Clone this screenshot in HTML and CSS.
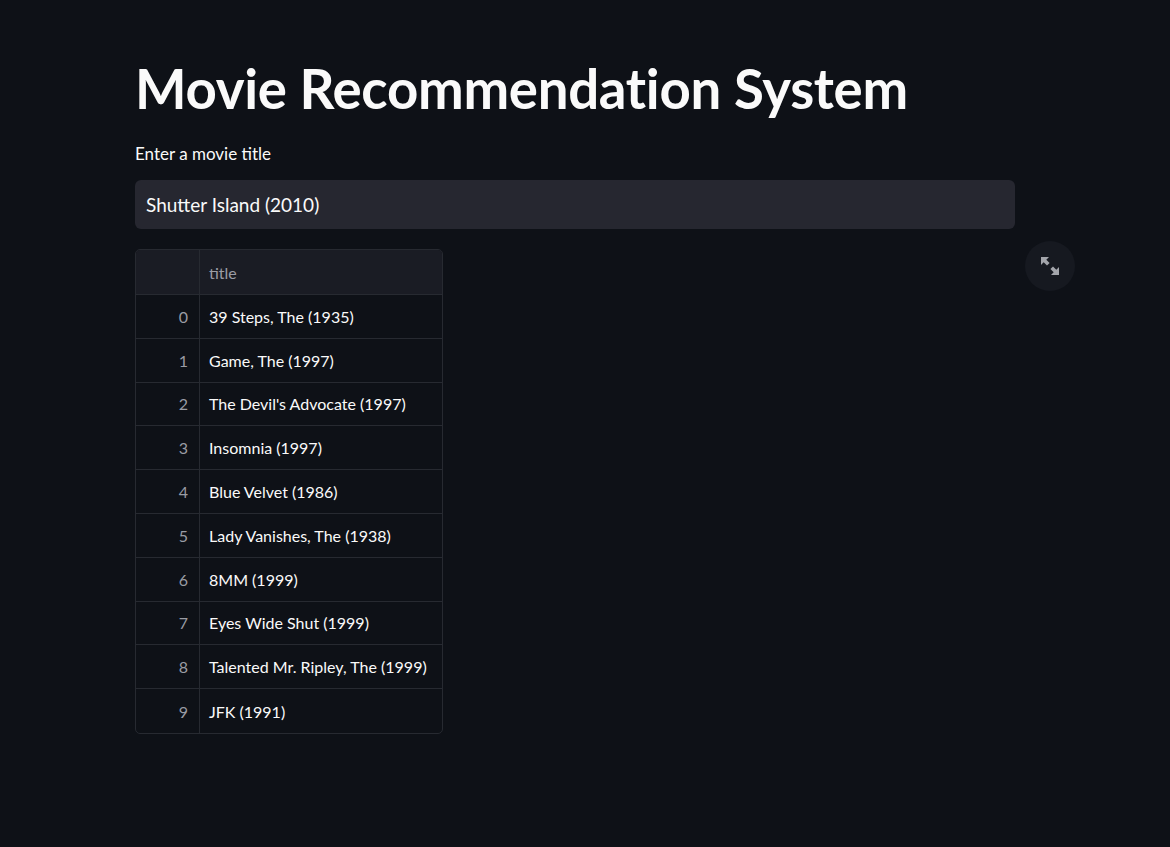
FILE: index.html
```html
<!DOCTYPE html>
<html>
<head>
<meta charset="utf-8">
<link rel="stylesheet" href="styles.css">
</head>
<body>
<main class="main">
  <h1 class="title">Movie Recommendation System</h1>
  <label class="label">Enter a movie title</label>
  <div class="input">Shutter Island (2010)</div>
  <div class="table-row">
    <div class="table">
      <div class="row head"><div class="idx"></div><div class="cell">title</div></div>
      <div class="row"><div class="idx">0</div><div class="cell">39 Steps, The (1935)</div></div>
      <div class="row"><div class="idx">1</div><div class="cell">Game, The (1997)</div></div>
      <div class="row"><div class="idx">2</div><div class="cell">The Devil's Advocate (1997)</div></div>
      <div class="row"><div class="idx">3</div><div class="cell">Insomnia (1997)</div></div>
      <div class="row"><div class="idx">4</div><div class="cell">Blue Velvet (1986)</div></div>
      <div class="row"><div class="idx">5</div><div class="cell">Lady Vanishes, The (1938)</div></div>
      <div class="row"><div class="idx">6</div><div class="cell">8MM (1999)</div></div>
      <div class="row"><div class="idx">7</div><div class="cell">Eyes Wide Shut (1999)</div></div>
      <div class="row"><div class="idx">8</div><div class="cell">Talented Mr. Ripley, The (1999)</div></div>
      <div class="row last"><div class="idx">9</div><div class="cell">JFK (1991)</div></div>
    </div>
    <button class="expand" aria-label="Fullscreen">
      <svg width="20" height="20" viewBox="0 0 20 20">
        <path d="M1 1h8L6.3 3.7 9.6 7 7 9.6 3.7 6.3 1 9z" fill="#a3a5ab"/>
        <path d="M19 19h-8l2.7-2.7-3.3-3.3 2.6-2.6 3.3 3.3L19 11z" fill="#a3a5ab"/>
      </svg>
    </button>
  </div>
</main>
</body>
</html>
```
FILE: styles.css
```css
* { box-sizing: border-box; }
html, body {
  margin: 0;
  background: #0e1117;
  color: #fafafa;
  font-family: Lato, "Open Sans", sans-serif;
}
.main {
  width: 940px;
  margin-left: 135px;
  padding: 52px 0 0 0;
  display: flex;
  flex-direction: column;
}
.title {
  margin: 0;
  font-size: 54.6px;
  font-weight: 700;
  line-height: 72px;
  letter-spacing: -0.3px;
}
.label {
  margin-top: 18px;
  font-size: 17px;
  line-height: 24px;
}
.input {
  margin-top: 14px;
  width: 880px;
  height: 49px;
  background: #262730;
  border-radius: 6px;
  padding: 0 11px;
  font-size: 19px;
  line-height: 49px;
}
.table-row {
  margin-top: 20px;
  display: flex;
  justify-content: space-between;
  align-items: flex-start;
  width: 940px;
}
.table {
  width: 308px;
  border: 1px solid #272a31;
  border-radius: 5px;
  overflow: hidden;
  font-size: 16px;
}
.row {
  display: flex;
  height: 43.8px;
  border-bottom: 1px solid #272a31;
  align-items: center;
}
.row.last { border-bottom: none; }
.row.head { background: #1a1c24; height: 45px; }
.idx {
  width: 64px;
  height: 100%;
  border-right: 1px solid #272a31;
  display: flex;
  align-items: center;
  justify-content: flex-end;
  padding-right: 11px;
  color: #9a9ca4;
}
.cell {
  padding-left: 9px;
  color: #fafafa;
}
.head .cell { color: #9a9ca4; }
.expand {
  margin-top: -8px;
  width: 50px;
  height: 50px;
  border-radius: 50%;
  border: none;
  background: #161920;
  display: flex;
  align-items: center;
  justify-content: center;
  padding: 0;
}
```
